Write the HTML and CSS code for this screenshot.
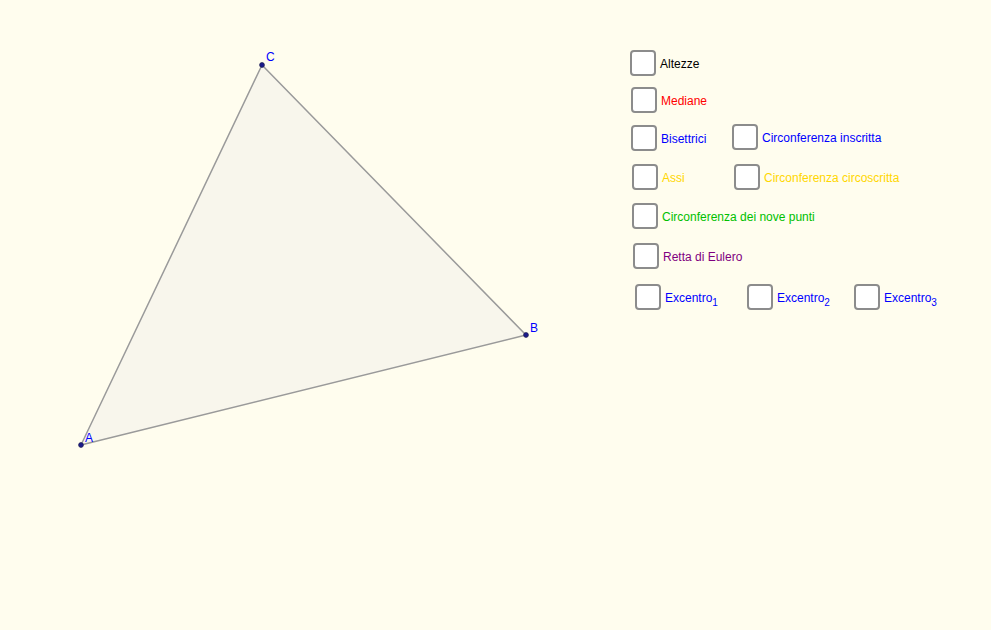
FILE: index.html
```html
<!DOCTYPE html>
<html lang="it">
<head>
<meta charset="utf-8">
<title>Triangolo</title>
<link rel="stylesheet" href="styles.css">
</head>
<body>
<div class="canvas">
  <svg class="drawing" width="991" height="630" viewBox="0 0 991 630">
    <polygon class="tri" points="81,445 526,335 262,65"/>
    <circle class="pt" cx="81" cy="445" r="2.4"/>
    <circle class="pt" cx="526" cy="335" r="2.4"/>
    <circle class="pt" cx="262" cy="65" r="2.4"/>
    <text class="lbl" x="85" y="442">A</text>
    <text class="lbl" x="530" y="332">B</text>
    <text class="lbl" x="266" y="61">C</text>
  </svg>

  <label class="cb cb-altezze"><span class="box"></span><span class="t black">Altezze</span></label>
  <label class="cb cb-mediane"><span class="box"></span><span class="t red">Mediane</span></label>
  <label class="cb cb-bisettrici"><span class="box"></span><span class="t blue">Bisettrici</span></label>
  <label class="cb cb-inscritta"><span class="box"></span><span class="t blue">Circonferenza inscritta</span></label>
  <label class="cb cb-assi"><span class="box"></span><span class="t yellow">Assi</span></label>
  <label class="cb cb-circoscritta"><span class="box"></span><span class="t yellow">Circonferenza circoscritta</span></label>
  <label class="cb cb-nove"><span class="box"></span><span class="t green">Circonferenza dei nove punti</span></label>
  <label class="cb cb-eulero"><span class="box"></span><span class="t purple">Retta di Eulero</span></label>
  <label class="cb cb-ex1"><span class="box"></span><span class="t blue">Excentro<sub>1</sub></span></label>
  <label class="cb cb-ex2"><span class="box"></span><span class="t blue">Excentro<sub>2</sub></span></label>
  <label class="cb cb-ex3"><span class="box"></span><span class="t blue">Excentro<sub>3</sub></span></label>
</div>
</body>
</html>
```

FILE: styles.css
```css
html, body {
  margin: 0;
  padding: 0;
  background: #fffdee;
}
body {
  font-family: "Liberation Sans", Arial, sans-serif;
  font-size: 12px;
}
.canvas {
  position: relative;
  width: 991px;
  height: 630px;
  overflow: hidden;
  background: #fffdee;
}
.drawing {
  position: absolute;
  left: 0;
  top: 0;
}
.tri {
  fill: #f8f6ec;
  stroke: #9a9a9a;
  stroke-width: 1.5;
  stroke-linejoin: round;
}
.pt {
  fill: #1a1a8c;
  stroke: #222255;
  stroke-width: 0.8;
}
.lbl {
  font-family: "Liberation Sans", Arial, sans-serif;
  font-size: 12px;
  fill: #0000ff;
}
.cb {
  position: absolute;
  display: flex;
  align-items: center;
  gap: 4px;
  height: 26px;
  cursor: pointer;
}
.box {
  box-sizing: border-box;
  width: 26px;
  height: 26px;
  border: 2px solid #8c8c8c;
  border-radius: 4px;
  background: #ffffff;
}
.t {
  line-height: 14px;
  padding-top: 2px;
  white-space: nowrap;
}
.t sub {
  font-size: 10px;
  vertical-align: -4px;
  line-height: 0;
}
.black { color: #000000; }
.red { color: #ff0000; }
.blue { color: #0000ff; }
.yellow { color: #ffd700; }
.green { color: #00c000; }
.purple { color: #800080; }

.cb-altezze { left: 630px; top: 50px; }
.cb-mediane { left: 631px; top: 87px; }
.cb-bisettrici { left: 631px; top: 125px; }
.cb-inscritta { left: 732px; top: 124px; }
.cb-assi { left: 632px; top: 164px; }
.cb-circoscritta { left: 734px; top: 164px; }
.cb-nove { left: 632px; top: 203px; }
.cb-eulero { left: 633px; top: 243px; }
.cb-ex1 { left: 635px; top: 284px; }
.cb-ex2 { left: 747px; top: 284px; }
.cb-ex3 { left: 854px; top: 284px; }
```
